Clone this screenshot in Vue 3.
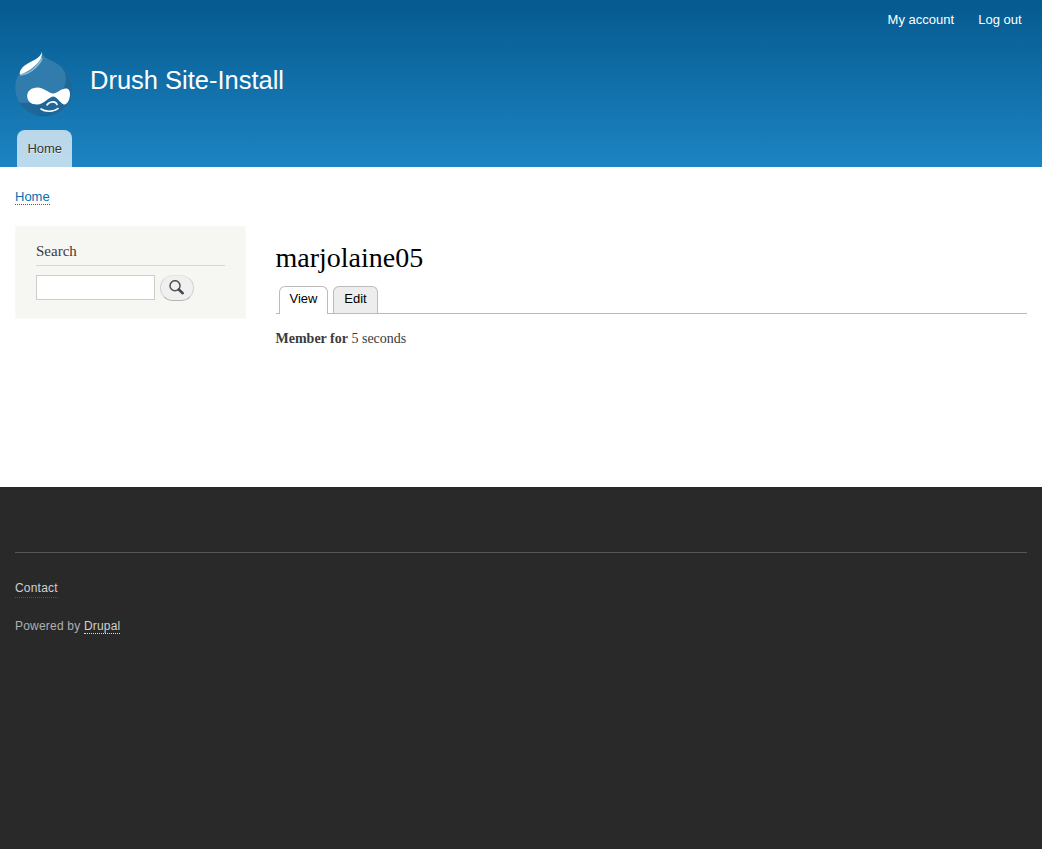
<script setup>
const userLinks = ['My account', 'Log out']
const tabs = [
  { label: 'View', active: true },
  { label: 'Edit', active: false },
]
</script>

<template>
  <div class="page">
    <header class="header">
      <nav class="user-menu">
        <a v-for="link in userLinks" :key="link" href="#">{{ link }}</a>
      </nav>
      <div class="branding">
        <svg class="logo" width="58" height="66" viewBox="0 0 58 66">
          <defs>
            <clipPath id="drop">
              <path d="M26.800 .8C27.500 6 34 8.500 40 11.500C51 17 57.300 26 57.300 36.500C57.300 53 44.500 65 28.700 65C12.500 65 .3 52.500 .3 36.500C.3 27 5 20 12 15C20 10 26.800 8 26.800 .8Z" />
            </clipPath>
          </defs>
          <g clip-path="url(#drop)">
            <rect width="58" height="66" fill="#307cac" />
            <path d="M41 12C48 16 51 22 51 28C51 43 33 51 15 51.500C8 52.500 4 52 0 49V66H58V12Z" fill="#1f6699" />
            <path d="M1 48C8 65 20 65 29 65C43 65 52 58 56 46" fill="none" stroke="#185b8d" stroke-width="1.200" />
          </g>
          <path d="M5 23.800C10 23.500 16 20.500 20 16.800C23.500 13.500 26 10.500 27 7" fill="none" stroke="#8db6d2" stroke-width="1.800" />
          <path d="M26.600 .8C28 7.500 23 12.500 18 16.500C13 20.500 8 23 4.800 23.200C4.300 18.500 9 14 15 11.200C20 8.800 26 6.300 26.600 .8Z" fill="#fff" />
          <path d="M22.500 36.500C29 36.500 34 42.500 38 42.500C42 42.500 46 37.500 51 37.500C54 37.500 55 40 55 43C55 48 52.500 53.500 49.500 53.500C46 53.500 42.500 46 38.500 45.500C34 45.500 29 53.500 22 53.500C16 53.500 12.200 50 12.200 45C12.200 40 16.500 36.500 22.500 36.500Z" fill="#fff" />
          <path d="M32 54C34 50.500 40.500 49.500 42 53.500M26 58C30 61 39 61 43 57.500" fill="none" stroke="#fff" stroke-width="1.600" stroke-linecap="round" />
        </svg>
        <a class="site-name" href="#">Drush Site-Install</a>
      </div>
      <nav class="main-menu"><a href="#">Home</a></nav>
    </header>

    <div class="main">
      <nav class="breadcrumb"><a href="#">Home</a></nav>
      <div class="columns">
        <aside class="sidebar">
          <h2>Search</h2>
          <form class="search" @submit.prevent>
            <input type="search" aria-label="Search" />
            <button type="submit" aria-label="Search">
              <svg width="16" height="16" viewBox="0 0 16 16">
                <circle cx="6" cy="5.700" r="5" fill="none" stroke="#505050" stroke-width="1.500" />
                <path d="M9.800 9.500L13.700 13.200" fill="none" stroke="#484848" stroke-width="2.600" stroke-linecap="round" />
              </svg>
            </button>
          </form>
        </aside>
        <main class="content">
          <h1>marjolaine05</h1>
          <nav class="tabs">
            <a v-for="tab in tabs" :key="tab.label" href="#" :class="{ active: tab.active }">{{ tab.label }}</a>
          </nav>
          <p class="member"><strong>Member for</strong> 5 seconds</p>
        </main>
      </div>
    </div>

    <footer class="footer">
      <div class="footer-inner">
        <div class="contact"><a href="#">Contact</a></div>
        <div class="powered">Powered by <a href="#">Drupal</a></div>
      </div>
    </footer>
  </div>
</template>

<style>
body {
  background: #292929;
}
</style>

<style scoped>
.page {
  height: 849px;
  display: flex;
  flex-direction: column;
  overflow: hidden;
  font: 14px/21px "Liberation Serif", serif;
  color: #3b3b3b;
  background: #292929;
}
a {
  text-decoration: none;
}
.header {
  height: 167px;
  flex: none;
  background: linear-gradient(#055a8e, #1d84c3);
  font-family: "Liberation Sans", sans-serif;
}
.user-menu {
  height: 40px;
  display: flex;
  justify-content: flex-end;
  gap: 24.200px;
  padding-right: 20.400px;
  box-sizing: border-box;
  font-size: 13px;
  line-height: 40px;
}
.user-menu a {
  color: #fffeff;
}
.branding {
  display: flex;
  height: 79px;
  padding: 11px 0 0 15px;
  box-sizing: border-box;
}
.logo {
  display: block;
  flex: none;
}
.site-name {
  margin: 14px 0 0 17px;
  font-size: 25.490px;
  line-height: 30px;
  color: #fffeff;
}
.main-menu {
  padding: 11px 0 0 17px;
}
.main-menu a {
  display: block;
  width: 55px;
  height: 37px;
  box-sizing: border-box;
  padding-left: 10.400px;
  border-radius: 8px 8px 0 0;
  background: rgba(255, 255, 255, 0.7);
  color: #333;
  font-size: 13px;
  line-height: 37px;
  text-shadow: 0 1px #eee;
}
.main {
  height: 320px;
  flex: none;
  box-sizing: border-box;
  padding: 21px 15px 0;
  background: #fff;
}
.breadcrumb {
  height: 38px;
  display: flex;
  font: 13px/18px "Liberation Sans", sans-serif;
}
.breadcrumb a {
  height: 16px;
  border-bottom: 1px dotted #0071b3;
  color: #0071b3;
}
.columns {
  display: flex;
  align-items: flex-start;
}
.sidebar {
  width: 231px;
  height: 93px;
  box-sizing: border-box;
  padding: 15px 20px 0;
  border: 1px solid #f9f9f9;
  background: #f6f6f2;
}
h2 {
  margin: 0 0 9px;
  height: 23px;
  border-bottom: 1px solid #d6d6d6;
  font-size: 15px;
  line-height: 19px;
  font-weight: 400;
}
.search {
  display: flex;
  gap: 5px;
}
.search input {
  width: 119px;
  height: 25px;
  box-sizing: border-box;
  margin: 0;
  border: 1px solid #ccc;
  background: #fff;
  padding: 2px;
  appearance: none;
  border-radius: 0;
}
.search button {
  display: flex;
  align-items: flex-start;
  width: 34px;
  height: 26px;
  box-sizing: border-box;
  padding: 4px 0 0 8px;
  border: 1px solid #e4e4e4;
  border-bottom-color: #b4b4b4;
  border-left-color: #d2d2d2;
  border-right-color: #d2d2d2;
  border-radius: 13px;
  background: #f0f0f0;
}
.search svg {
  display: block;
  flex: none;
}
.content {
  flex: 1;
  margin-left: 29.500px;
}
h1 {
  margin: 15px 0 0;
  color: #000;
  font-size: 28px;
  font-weight: 400;
  line-height: 34px;
}
.tabs {
  display: flex;
  gap: 5px;
  height: 28px;
  margin-top: 11px;
  padding-left: 3px;
  box-sizing: border-box;
  border-bottom: 1px solid #bbb;
}
.tabs a {
  height: 27px;
  box-sizing: border-box;
  border: 1px solid #bbb;
  border-bottom: 0;
  border-radius: 6px 6px 0 0;
  padding: 0 10.400px 0 10px;
  background: #ededed;
  color: #000;
  font: 13px/24px "Liberation Sans", sans-serif;
}
.tabs a.active {
  height: 28px;
  padding-right: 9.800px;
  background: #fff;
}
.member {
  margin: 14px 0 0;
}
.footer {
  flex: 1;
  padding: 65px 15px 0;
  color: #b0b0b0;
  font: 12px/18px "Liberation Sans", sans-serif;
  letter-spacing: 0.2px;
}
.footer-inner {
  border-top: 1px solid #555;
  padding-top: 26px;
}
.footer a {
  display: inline-block;
  color: #d0d0d0;
}
.contact {
  height: 38px;
}
.contact a {
  height: 18px;
  border-bottom: 1px dotted #505050;
}
.powered a {
  height: 16px;
  border-bottom: 1px dotted #ddd;
}
</style>
